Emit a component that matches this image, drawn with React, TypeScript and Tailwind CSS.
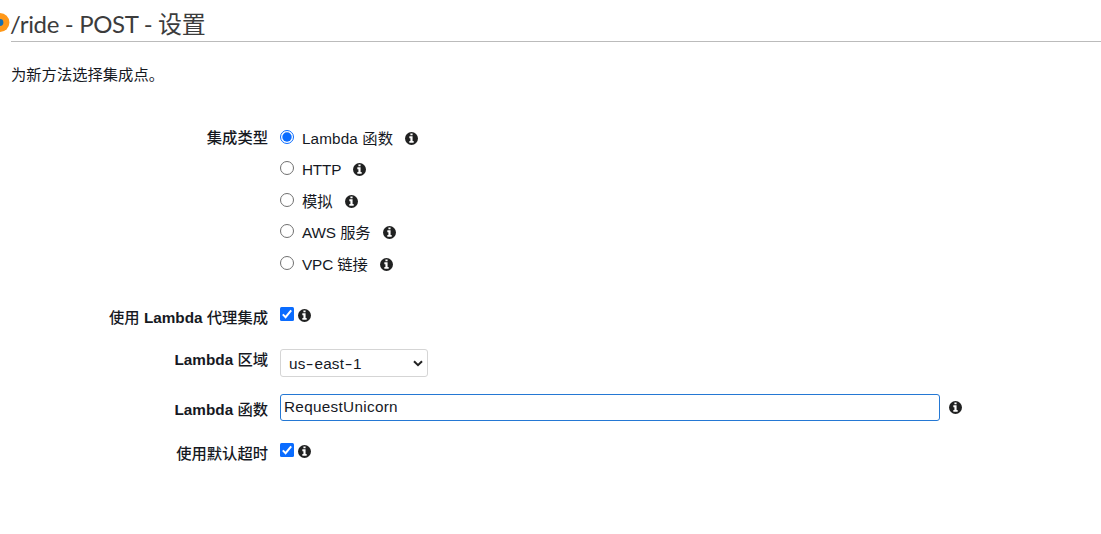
import React from "react";

const options = [
  { label: "Lambda 函数", row: "tracking-[0.1px]", checked: true },
  { label: "HTTP", row: "tracking-[-0.2px]", checked: false },
  { label: "模拟", row: "mt-px", checked: false },
  { label: "AWS 服务", row: "tracking-[-0.1px]", checked: false },
  { label: "VPC 链接", row: "mt-px tracking-[-0.1px]", checked: false },
];

function Info({ className = "" }: { className?: string }) {
  return (
    <svg viewBox="0 0 12 12" className={`size-[13px] shrink-0 ${className}`}>
      <circle cx="6" cy="6" r="6" fill="#202121" />
      <path d="M5 1.3h2v1.75H5zM4 4h3v4.2h1V10H4V8.2h1V5.7H4z" fill="white" />
    </svg>
  );
}

function Radio({ checked }: { checked: boolean }) {
  return (
    <svg viewBox="0 0 14 14" className="size-[14px] shrink-0" role="radio" aria-checked={checked}>
      <circle cx="7" cy="7" r="6.5" fill="white" stroke={checked ? "#0a6cff" : "#707070"} />
      {checked && <circle cx="7" cy="7" r="4.7" fill="#0a6cff" />}
    </svg>
  );
}

function Checkbox() {
  return (
    <svg viewBox="0 0 14 14" className="size-[14px] shrink-0" role="checkbox" aria-checked="true">
      <rect width="14" height="14" rx="1.5" fill="#0a6cff" />
      <path d="M2.8 7.4 5.6 10.2 11.2 3.4" fill="none" stroke="white" strokeWidth="2" />
    </svg>
  );
}

function Label({ children, className = "" }: { children: React.ReactNode; className?: string }) {
  return (
    <div className={`w-[268px] shrink-0 whitespace-nowrap text-right font-medium leading-5 ${className}`}>
      {children}
    </div>
  );
}

export default function App() {
  return (
    <div className="flex h-[534px] w-[1101px] flex-col overflow-hidden bg-white font-['Liberation_Sans','Noto_Sans_CJK_SC',sans-serif] text-[15.3px] text-[#16191f]">
      <header className="flex h-[42px] shrink-0">
        <svg viewBox="0 0 11 42" className="h-[42px] w-[11px] shrink-0">
          <circle cx="0" cy="22.5" r="9.4" fill="#ff9819" />
          <circle cx="0" cy="22.5" r="3.4" fill="#146eb4" />
        </svg>
        <h1 className="flex-1 whitespace-nowrap border-b border-[#bbb] pt-[8px] font-['Lato','Noto_Sans_CJK_SC',sans-serif] text-[24px] leading-8 tracking-[-0.35px] text-[#3c3c3c]">
          <span className="-ml-px">/ride - POST - 设置</span>
        </h1>
      </header>
      <p className="mt-[23px] h-5 pl-[11px] leading-5">为新方法选择集成点。</p>

      <main className="mt-[38px] flex flex-col">
        <section className="flex h-[157px]">
          <Label className="mt-[5px]">集成类型</Label>
          <div className="ml-3 flex flex-col">
            {options.map((o) => (
              <div key={o.label} className={`flex h-[31px] items-center ${o.row}`}>
                <div className="-mt-[3px] flex">
                  <Radio checked={o.checked} />
                </div>
                <span className="ml-2 whitespace-nowrap leading-5">{o.label}</span>
                <Info className="ml-3" />
              </div>
            ))}
          </div>
        </section>

        <section className="mt-[27px] flex h-5 items-center">
          <Label className="mt-[2px]">
            使用 <b>Lambda</b> 代理集成
          </Label>
          <div className="-mt-[6px] ml-3 flex">
            <Checkbox />
          </div>
          <Info className="-mt-[4px] ml-1" />
        </section>

        <section className="mt-[22px] flex h-7">
          <Label className="mt-px">
            <b>Lambda</b> 区域
          </Label>
          <div className="ml-3 flex h-7 w-[148px] items-center justify-between rounded-[3px] border border-[#d5d5d5] pl-2 pr-1">
            <span className="mt-[3px] whitespace-nowrap tracking-[0.2px]">
              us<span className="mx-[1.8px] inline-block scale-x-150">-</span>east
              <span className="mx-[1.8px] inline-block scale-x-150">-</span>1
            </span>
            <svg viewBox="0 0 10 7" className="h-[7px] w-[10px]">
              <path d="M1 1.2 5 5.2 9 1.2" fill="none" stroke="#222" strokeWidth="2" />
            </svg>
          </div>
        </section>

        <section className="mt-4 flex h-7 items-center">
          <Label className="mt-[6px]">
            <b>Lambda</b> 函数
          </Label>
          <div className="ml-3 flex h-[27px] w-[660px] items-center rounded-[3px] border border-[#2478d4] pl-[3px] tracking-[0.3px]">
            RequestUnicorn
          </div>
          <Info className="ml-[9px]" />
        </section>

        <section className="mt-5 flex h-5 items-center">
          <Label className="mt-[6px]">使用默认超时</Label>
          <div className="-mt-[2px] ml-3 flex">
            <Checkbox />
          </div>
          <Info className="ml-1" />
        </section>
      </main>
    </div>
  );
}
